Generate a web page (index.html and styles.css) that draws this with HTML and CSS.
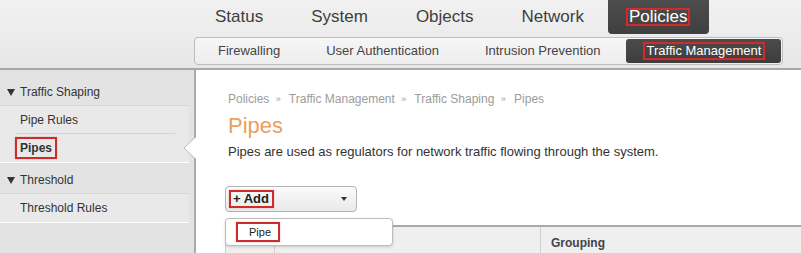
FILE: index.html
```html
<!DOCTYPE html>
<html>
<head>
<meta charset="utf-8">
<link rel="stylesheet" href="styles.css">
</head>
<body>
<header class="top">
  <nav class="mainnav">
    <a class="mi">Status</a>
    <a class="mi">System</a>
    <a class="mi">Objects</a>
    <a class="mi">Network</a>
    <a class="mi active"><span class="mark">Policies</span></a>
  </nav>
  <nav class="subnav">
    <a class="si">Firewalling</a>
    <a class="si">User Authentication</a>
    <a class="si">Intrusion Prevention</a>
    <a class="si active"><span class="mark">Traffic Management</span></a>
  </nav>
</header>
<div class="page">
  <aside class="side">
    <div class="sec"><i class="tri"></i>Traffic Shaping</div>
    <ul class="list">
      <li class="item sep">Pipe Rules</li>
      <li class="item current"><span class="mark">Pipes</span><svg class="notch" width="13" height="22" viewBox="0 0 13 22"><polygon points="13,0 1,11 13,22" fill="#fff"/><polyline points="12.5,0 1,11 12.5,22" fill="none" stroke="#b8b8b8" stroke-width="1"/></svg></li>
    </ul>
    <div class="sec"><i class="tri"></i>Threshold</div>
    <ul class="list">
      <li class="item">Threshold Rules</li>
    </ul>
  </aside>
  <main class="content">
    <div class="crumbs">Policies <span class="raq">»</span> Traffic Management <span class="raq">»</span> Traffic Shaping <span class="raq">»</span> Pipes</div>
    <h1 class="title">Pipes</h1>
    <p class="desc">Pipes are used as regulators for network traffic flowing through the system.</p>
    <div class="addwrap">
      <div class="addbtn"><span class="mark addlabel">+ Add</span><i class="caret"></i></div>
      <div class="menu"><span class="mark menuitem">Pipe</span></div>
    </div>
    <div class="table">
      <div class="th c1"></div>
      <div class="th c2"></div>
      <div class="th c3">Grouping</div>
    </div>
  </main>
</div>
</body>
</html>
```

FILE: styles.css
```css
* { box-sizing: border-box; }
html, body { margin: 0; padding: 0; }
body {
  font-family: "Liberation Sans", Arial, sans-serif;
  color: #333;
  background: #fff;
  width: 801px;
  height: 253px;
  overflow: hidden;
}
ul { list-style: none; margin: 0; padding: 0; }

.mark {
  border: 2px solid #cf2b2b;
  box-shadow: 0 0 1px rgba(207, 43, 43, 0.5);
}

/* header */
.top {
  height: 70px;
  background: linear-gradient(#f1f1f1, #e7e7e7);
  border-bottom: 2px solid #a7a7a7;
  padding-left: 191px;
}
.mainnav {
  display: flex;
  height: 34px;
}
.mi {
  display: block;
  line-height: 34px;
  padding: 0 24px;
  font-size: 17px;
  color: #3e3e3e;
}
.mi.active {
  background: linear-gradient(#4d4d4d, #3f3f3f);
  color: #fff;
  border-radius: 0 0 4px 4px;
  padding: 0 19px 0 18px;
  margin-left: -24px;
  margin-left: 0;
}
.mi:nth-child(4) { padding-right: 24px; }
.mi.active .mark {
  padding: 0 1px;
  line-height: 14px;
  display: inline-block;
}
.subnav {
  display: inline-flex;
  margin: 3px 0 0 3px;
  height: 28px;
  border: 1px solid #bdbdbd;
  border-radius: 4px;
  background: linear-gradient(#f6f6f6, #ededed);
}
.si {
  display: block;
  line-height: 26px;
  padding: 0 23px;
  font-size: 13px;
  color: #444;
}
.si.active {
  margin: 1px 1px 1px 2px;
  line-height: 24px;
  background: linear-gradient(#4b4b4b, #3d3d3d);
  color: #fff;
  border-radius: 3px;
  padding: 0 16px 0 17px;
}
.si.active .mark {
  display: inline-block;
  line-height: 14px;
  padding: 0 2px;
}

/* body */
.page {
  display: flex;
  height: 183px;
}
.side {
  width: 196px;
  flex: none;
  background: #e3e3e3;
  border-right: 2px solid #a9a9a9;
  padding-top: 5px;
  font-size: 12px;
  color: #333;
}
.sec {
  height: 30px;
  display: flex;
  align-items: center;
  padding: 4px 0 0 7px;
  color: #333;
}
.tri {
  width: 0;
  height: 0;
  border-left: 4px solid transparent;
  border-right: 4px solid transparent;
  border-top: 7px solid #333;
  margin-right: 5px;
}
.list {
  width: 189px;
  background: #e9e9e9;
  border-top: 1px solid #d6d6d6;
  border-bottom: 1px solid #fff;
}
.item {
  position: relative;
  height: 28px;
  line-height: 28px;
  padding-left: 20px;
}
.item.sep::after {
  content: "";
  position: absolute;
  left: 15px;
  right: 14px;
  bottom: 0;
  border-bottom: 1px solid #d4d4d4;
}
.item.current {
  padding-left: 15px;
  font-weight: bold;
  display: flex;
  align-items: center;
}
.item.current .mark {
  display: inline-block;
  line-height: 18px;
  padding: 0 3px;
}
.notch {
  position: absolute;
  right: -7px;
  top: 3px;
  display: block;
}

.content {
  flex: 1;
  padding-left: 29px;
  min-width: 0;
}
.crumbs {
  margin-top: 21px;
  padding-left: 3px;
  font-size: 12px;
  line-height: 16px;
  color: #9b9b9b;
}
.raq { font-size: 9px; padding: 0 5px 0 3px; vertical-align: 1px; }
.title {
  margin: 6px 0 0;
  padding-left: 3px;
  font-size: 22px;
  line-height: 26px;
  font-weight: normal;
  color: #e99f5f;
}
.desc {
  margin: 5px 0 0;
  padding-left: 3px;
  font-size: 13px;
  line-height: 16px;
  color: #333;
}
.addwrap {
  position: relative;
  margin-top: 26px;
  height: 26px;
}
.addbtn {
  width: 132px;
  height: 26px;
  border: 1px solid #b4b4b4;
  border-radius: 4px;
  background: linear-gradient(#fbfbfb, #e9e9e9);
  display: flex;
  align-items: center;
  padding-left: 3px;
  padding-right: 9px;
  justify-content: space-between;
}
.addlabel {
  font-size: 13px;
  font-weight: bold;
  color: #222;
  line-height: 14px;
  padding: 0 3px 0 2px;
}
.caret {
  width: 0;
  height: 0;
  border-left: 3.5px solid transparent;
  border-right: 3.5px solid transparent;
  border-top: 4px solid #333;
}
.menu {
  position: absolute;
  left: 0;
  top: 32px;
  width: 168px;
  height: 28px;
  background: #fff;
  border: 1px solid #bcbcbc;
  border-radius: 4px;
  box-shadow: 0 1px 3px rgba(0,0,0,0.15);
  z-index: 2;
  padding: 3px 0 0 10px;
}
.menuitem {
  display: inline-block;
  width: 44px;
  height: 20px;
  line-height: 16px;
  font-size: 11px;
  color: #222;
  padding-left: 11px;
}
.table {
  margin-top: 13px;
  display: flex;
  height: 40px;
  border-top: 2px solid #a9a9a9;
  border-left: 1px solid #cfcfcf;
  background: #efefef;
  margin-right: -2px;
}
.th {
  height: 100%;
  border-right: 1px solid #cfcfcf;
  font-size: 12px;
  font-weight: bold;
  color: #444;
  padding: 9px 0 0 10px;
}
.c1 { width: 49px; }
.c2 { width: 266px; }
.c3 { flex: 1; border-right: 0; }
```
